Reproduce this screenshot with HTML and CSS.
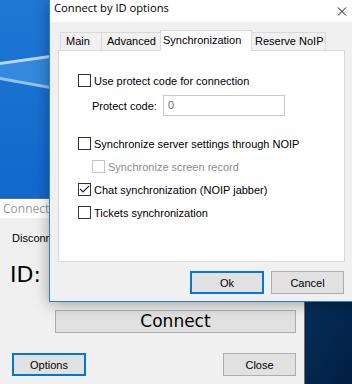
FILE: index.html
```html
<!DOCTYPE html>
<html>
<head>
<meta charset="utf-8">
<title>Connect by ID options</title>
<link rel="stylesheet" href="styles.css">
</head>
<body>
<div class="desktop">
  <svg class="wallpaper" width="352" height="384" viewBox="0 0 352 384">
    <defs>
      <linearGradient id="sky" x1="0" y1="0" x2="0" y2="1">
        <stop offset="0" stop-color="#1f78d6"/>
        <stop offset="0.5" stop-color="#1169cb"/>
        <stop offset="1" stop-color="#0a55ae"/>
      </linearGradient>
      <linearGradient id="night" x1="0" y1="0" x2="1" y2="1">
        <stop offset="0" stop-color="#05305d"/>
        <stop offset="1" stop-color="#021f40"/>
      </linearGradient>
    </defs>
    <rect width="352" height="384" fill="url(#sky)"/>
    <polygon points="0,63 50,56 50,88 0,78" fill="#3a8fe0" opacity="0.8"/>
    <polygon points="0,62 50,55 50,58 0,65" fill="#cfe5fa" opacity="0.85"/>
    <polygon points="0,77 50,86 50,89 0,80" fill="#b9d9f6" opacity="0.75"/>
    <rect x="300" y="296" width="52" height="88" fill="url(#night)"/>
  </svg>

  <div class="win back">
    <div class="back-title">Connect</div>
    <div class="back-body">
      <div class="status">Disconnected</div>
      <div class="id-row"><span class="id-label">ID:</span></div>
      <div class="connect-row"><button class="btn big">Connect</button></div>
      <div class="bottom-row">
        <button class="btn focus wide74">Options</button>
        <button class="btn wide73">Close</button>
      </div>
    </div>
  </div>

  <div class="win dialog">
    <div class="titlebar">
      <span class="title-text">Connect by ID options</span>
      <svg class="close-x" width="10" height="10" viewBox="0 0 10 10">
        <path d="M1 1.5 L9 9.5 M9 1.5 L1 9.5" stroke="#111" stroke-width="1" fill="none"/>
      </svg>
    </div>
    <div class="tabs">
      <div class="tab t-main">Main</div>
      <div class="tab t-adv">Advanced</div>
      <div class="tab t-sync selected">Synchronization</div>
      <div class="tab t-res">Reserve NoIP</div>
    </div>
    <div class="panel">
      <div class="row first">
        <span class="cb"></span><span class="lbl">Use protect code for connection</span>
      </div>
      <div class="row protect">
        <span class="plabel">Protect code:</span>
        <span class="pinput">0</span>
      </div>
      <div class="row gap">
        <span class="cb"></span><span class="lbl">Synchronize server settings through NOIP</span>
      </div>
      <div class="row indent disabled">
        <span class="cb"></span><span class="lbl">Synchronize screen record</span>
      </div>
      <div class="row">
        <span class="cb checked"><svg width="11" height="11" viewBox="0 0 11 11"><polyline points="1,5 4,8 10,2" fill="none" stroke="#222" stroke-width="1.1"/></svg></span><span class="lbl">Chat synchronization (NOIP jabber)</span>
      </div>
      <div class="row">
        <span class="cb"></span><span class="lbl">Tickets synchronization</span>
      </div>
    </div>
    <div class="actions">
      <button class="btn focus ok">Ok</button>
      <button class="btn cancel">Cancel</button>
    </div>
  </div>
</div>
</body>
</html>
```

FILE: styles.css
```css
html, body {
  margin: 0;
  padding: 0;
}
body {
  width: 352px;
  height: 384px;
  overflow: hidden;
  font-family: "Liberation Sans", Arial, sans-serif;
  font-size: 11px;
  color: #000;
}
.desktop {
  position: relative;
  width: 352px;
  height: 384px;
  overflow: hidden;
}
.wallpaper {
  position: absolute;
  left: 0;
  top: 0;
}
.win {
  position: absolute;
  box-sizing: border-box;
  background: #f0f0f0;
}

/* background window */
.back {
  left: -1px;
  top: 198px;
  width: 306px;
  height: 200px;
  border: 1px solid #6f6f6f;
}
.back-title {
  height: 19px;
  line-height: 19px;
  background: #fff;
  color: #9a9a9a;
  font-family: "Open Sans", sans-serif;
  font-size: 12px;
  padding-left: 3px;
}
.back-body {
  padding-top: 12px;
}
.status {
  padding-left: 12px;
  line-height: 16px;
  white-space: nowrap;
}
.id-row {
  margin-top: 16px;
  height: 26px;
  padding-left: 10px;
}
.id-label {
  font-family: "DejaVu Sans", sans-serif;
  font-size: 22px;
  line-height: 26px;
}
.connect-row {
  margin-top: 22px;
  padding-left: 55px;
}
.btn {
  box-sizing: border-box;
  height: 23px;
  padding: 0;
  margin: 0;
  background: #e1e1e1;
  border: 1px solid #adadad;
  font-family: inherit;
  font-size: 11px;
  color: #000;
  text-align: center;
}
.btn.focus {
  border: 2px solid #0078d7;
}
.btn.big {
  width: 241px;
  font-family: "DejaVu Sans", sans-serif;
  font-size: 17px;
  line-height: 19px;
}
.bottom-row {
  margin-top: 20px;
  margin-left: 12px;
  width: 284px;
  display: flex;
  justify-content: space-between;
}
.wide74 { width: 74px; }
.wide73 { width: 73px; }

/* dialog */
.dialog {
  left: 49px;
  top: -1px;
  width: 312px;
  height: 303px;
  border: 1px solid #2a7fce;
  box-shadow: 0 2px 14px rgba(0, 0, 0, 0.35);
}
.titlebar {
  height: 22px;
  background: #fff;
  display: flex;
  align-items: flex-start;
}
.title-text {
  flex: 1;
  padding-left: 4px;
  line-height: 16px;
  font-family: "Open Sans", sans-serif;
  font-size: 11.2px;
  white-space: nowrap;
}
.close-x {
  margin-top: 6px;
  margin-right: 13px;
}
.tabs {
  margin-top: 8px;
  height: 20px;
  padding-left: 10px;
  display: flex;
  align-items: flex-end;
}
.tab {
  box-sizing: border-box;
  height: 18px;
  line-height: 16px;
  border: 1px solid #d9d9d9;
  border-bottom: none;
  background: #f0f0f0;
  white-space: nowrap;
  padding-left: 5px;
}
.t-main { width: 42px; }
.t-adv { width: 62px; margin-left: -1px; }
.t-sync { width: 92px; margin-left: -3px; padding-left: 2px; }
.t-res { width: 75px; margin-left: -1px; padding-left: 3px; }
.tab.selected {
  position: relative;
  z-index: 1;
  height: 21px;
  line-height: 18px;
  margin-bottom: -1px;
  background: #fff;
}
.panel {
  box-sizing: border-box;
  margin-left: 8px;
  width: 287px;
  height: 212px;
  border: 1px solid #d9d9d9;
  background: #fff;
  padding-top: 18px;
}
.row {
  height: 23px;
  display: flex;
  align-items: center;
  padding-left: 19px;
  white-space: nowrap;
}
.row.protect {
  margin-top: 3px;
  height: 21px;
  padding-left: 33px;
}
.row.gap {
  margin-top: 16px;
}
.row.indent {
  padding-left: 33px;
}
.cb {
  box-sizing: border-box;
  width: 13px;
  height: 13px;
  border: 1px solid #333;
  background: #fff;
  flex: none;
  display: flex;
}
.cb svg {
  display: block;
}
.lbl {
  margin-left: 3px;
}
.disabled .cb {
  border-color: #c4c4c4;
}
.disabled .lbl {
  color: #8d8d8d;
}
.plabel {
  width: 71px;
}
.pinput {
  box-sizing: border-box;
  width: 122px;
  height: 21px;
  border: 1px solid #c9c9c9;
  background: #fff;
  color: #6d6d6d;
  padding-left: 4px;
  line-height: 19px;
}
.actions {
  margin-top: 9px;
  display: flex;
  padding-left: 140px;
}
.ok { width: 74px; }
.cancel { width: 73px; margin-left: 7px; }
```
